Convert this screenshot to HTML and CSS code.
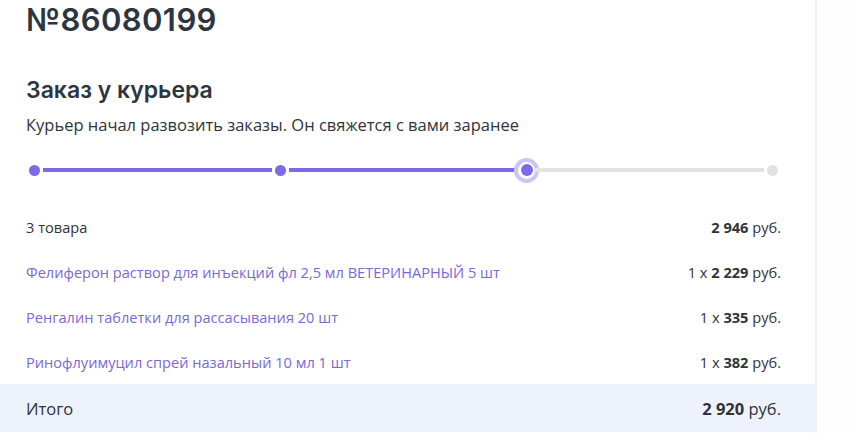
FILE: index.html
```html
<!DOCTYPE html>
<html lang="ru">
<head>
<meta charset="utf-8">
<link rel="stylesheet" href="styles.css">
</head>
<body>
<div class="page">
  <main class="panel">
    <h1 class="order-no">№86080199</h1>
    <section class="status">
      <h2 class="status-title">Заказ у курьера</h2>
      <p class="status-text">Курьер начал развозить заказы. Он свяжется с вами заранее</p>
      <div class="progress">
        <span class="dot done"></span>
        <span class="bar done"></span>
        <span class="dot done"></span>
        <span class="bar done"></span>
        <span class="dot current"><span class="core"></span></span>
        <span class="bar"></span>
        <span class="dot"></span>
      </div>
    </section>
    <ul class="items">
      <li class="row"><span class="name">3 товара</span><span class="price"><b>2 946</b> руб.</span></li>
      <li class="row"><a class="name link" href="#">Фелиферон раствор для инъекций фл 2,5 мл ВЕТЕРИНАРНЫЙ 5 шт</a><span class="price">1 x <b>2 229</b> руб.</span></li>
      <li class="row"><a class="name link" href="#">Ренгалин таблетки для рассасывания 20 шт</a><span class="price">1 x <b>335</b> руб.</span></li>
      <li class="row"><a class="name link" href="#">Ринофлуимуцил спрей назальный 10 мл 1 шт</a><span class="price">1 x <b>382</b> руб.</span></li>
    </ul>
    <div class="total"><span>Итого</span><span class="price"><b>2 920</b> руб.</span></div>
  </main>
</div>
</body>
</html>
```
FILE: styles.css
```css
html, body {
  margin: 0;
  padding: 0;
  background: #fefefe;
}
body {
  font-family: "Open Sans", "Noto Sans", sans-serif;
  color: #2f3439;
}
.page {
  display: flex;
  height: 433px;
  overflow: hidden;
}
.panel {
  width: 815px;
  flex: none;
  background: #ffffff;
  border-right: 2px solid #eef0f8;
  display: flex;
  flex-direction: column;
}
.order-no {
  margin: 0;
  padding: 0 26px;
  font-family: "Inter", sans-serif;
  font-weight: 600;
  font-size: 31px;
  line-height: 40px;
  color: #2c3540;
  letter-spacing: 0.4px;
}
.status {
  padding: 36px 26px 0;
}
.status-title {
  margin: 0;
  font-family: "Inter", sans-serif;
  font-weight: 600;
  font-size: 23px;
  line-height: 28px;
  color: #2c3540;
}
.status-text {
  margin: 10px 0 0;
  font-size: 16.5px;
  line-height: 22px;
  color: #2f3439;
}
.progress {
  display: flex;
  align-items: center;
  height: 30px;
  margin: 19px 0 0 3px;
  width: 749px;
}
.dot {
  width: 11px;
  height: 11px;
  border-radius: 50%;
  background: #e2e2e2;
  flex: none;
  display: flex;
  align-items: center;
  justify-content: center;
}
.dot.done { background: #7b6be9; }
.dot.current {
  width: 25px;
  height: 25px;
  margin: 0 -7px;
  background: #fff;
  box-sizing: border-box;
  border: 4px solid #cbc4f6;
}
.dot.current .core {
  width: 12px;
  height: 12px;
  flex: none;
  border-radius: 50%;
  background: #7b6be9;
}
.bar {
  flex: 1;
  height: 4px;
  margin: 0 3px;
  background: #e2e2e2;
}
.bar.done { background: #7b6be9; }
.items {
  list-style: none;
  margin: 19px 0 0;
  padding: 0;
}
.row {
  display: flex;
  justify-content: space-between;
  align-items: center;
  height: 45px;
  padding: 0 34px 0 26px;
  font-size: 14.6px;
  color: #2f3439;
}
.link {
  color: #7b68d6;
  text-decoration: none;
}
.price b { font-weight: 700; }
.total {
  display: flex;
  justify-content: space-between;
  align-items: center;
  height: 48px;
  padding: 0 34px 0 26px;
  background: #eef2fc;
  font-size: 16.5px;
  color: #2f3439;
}
```
